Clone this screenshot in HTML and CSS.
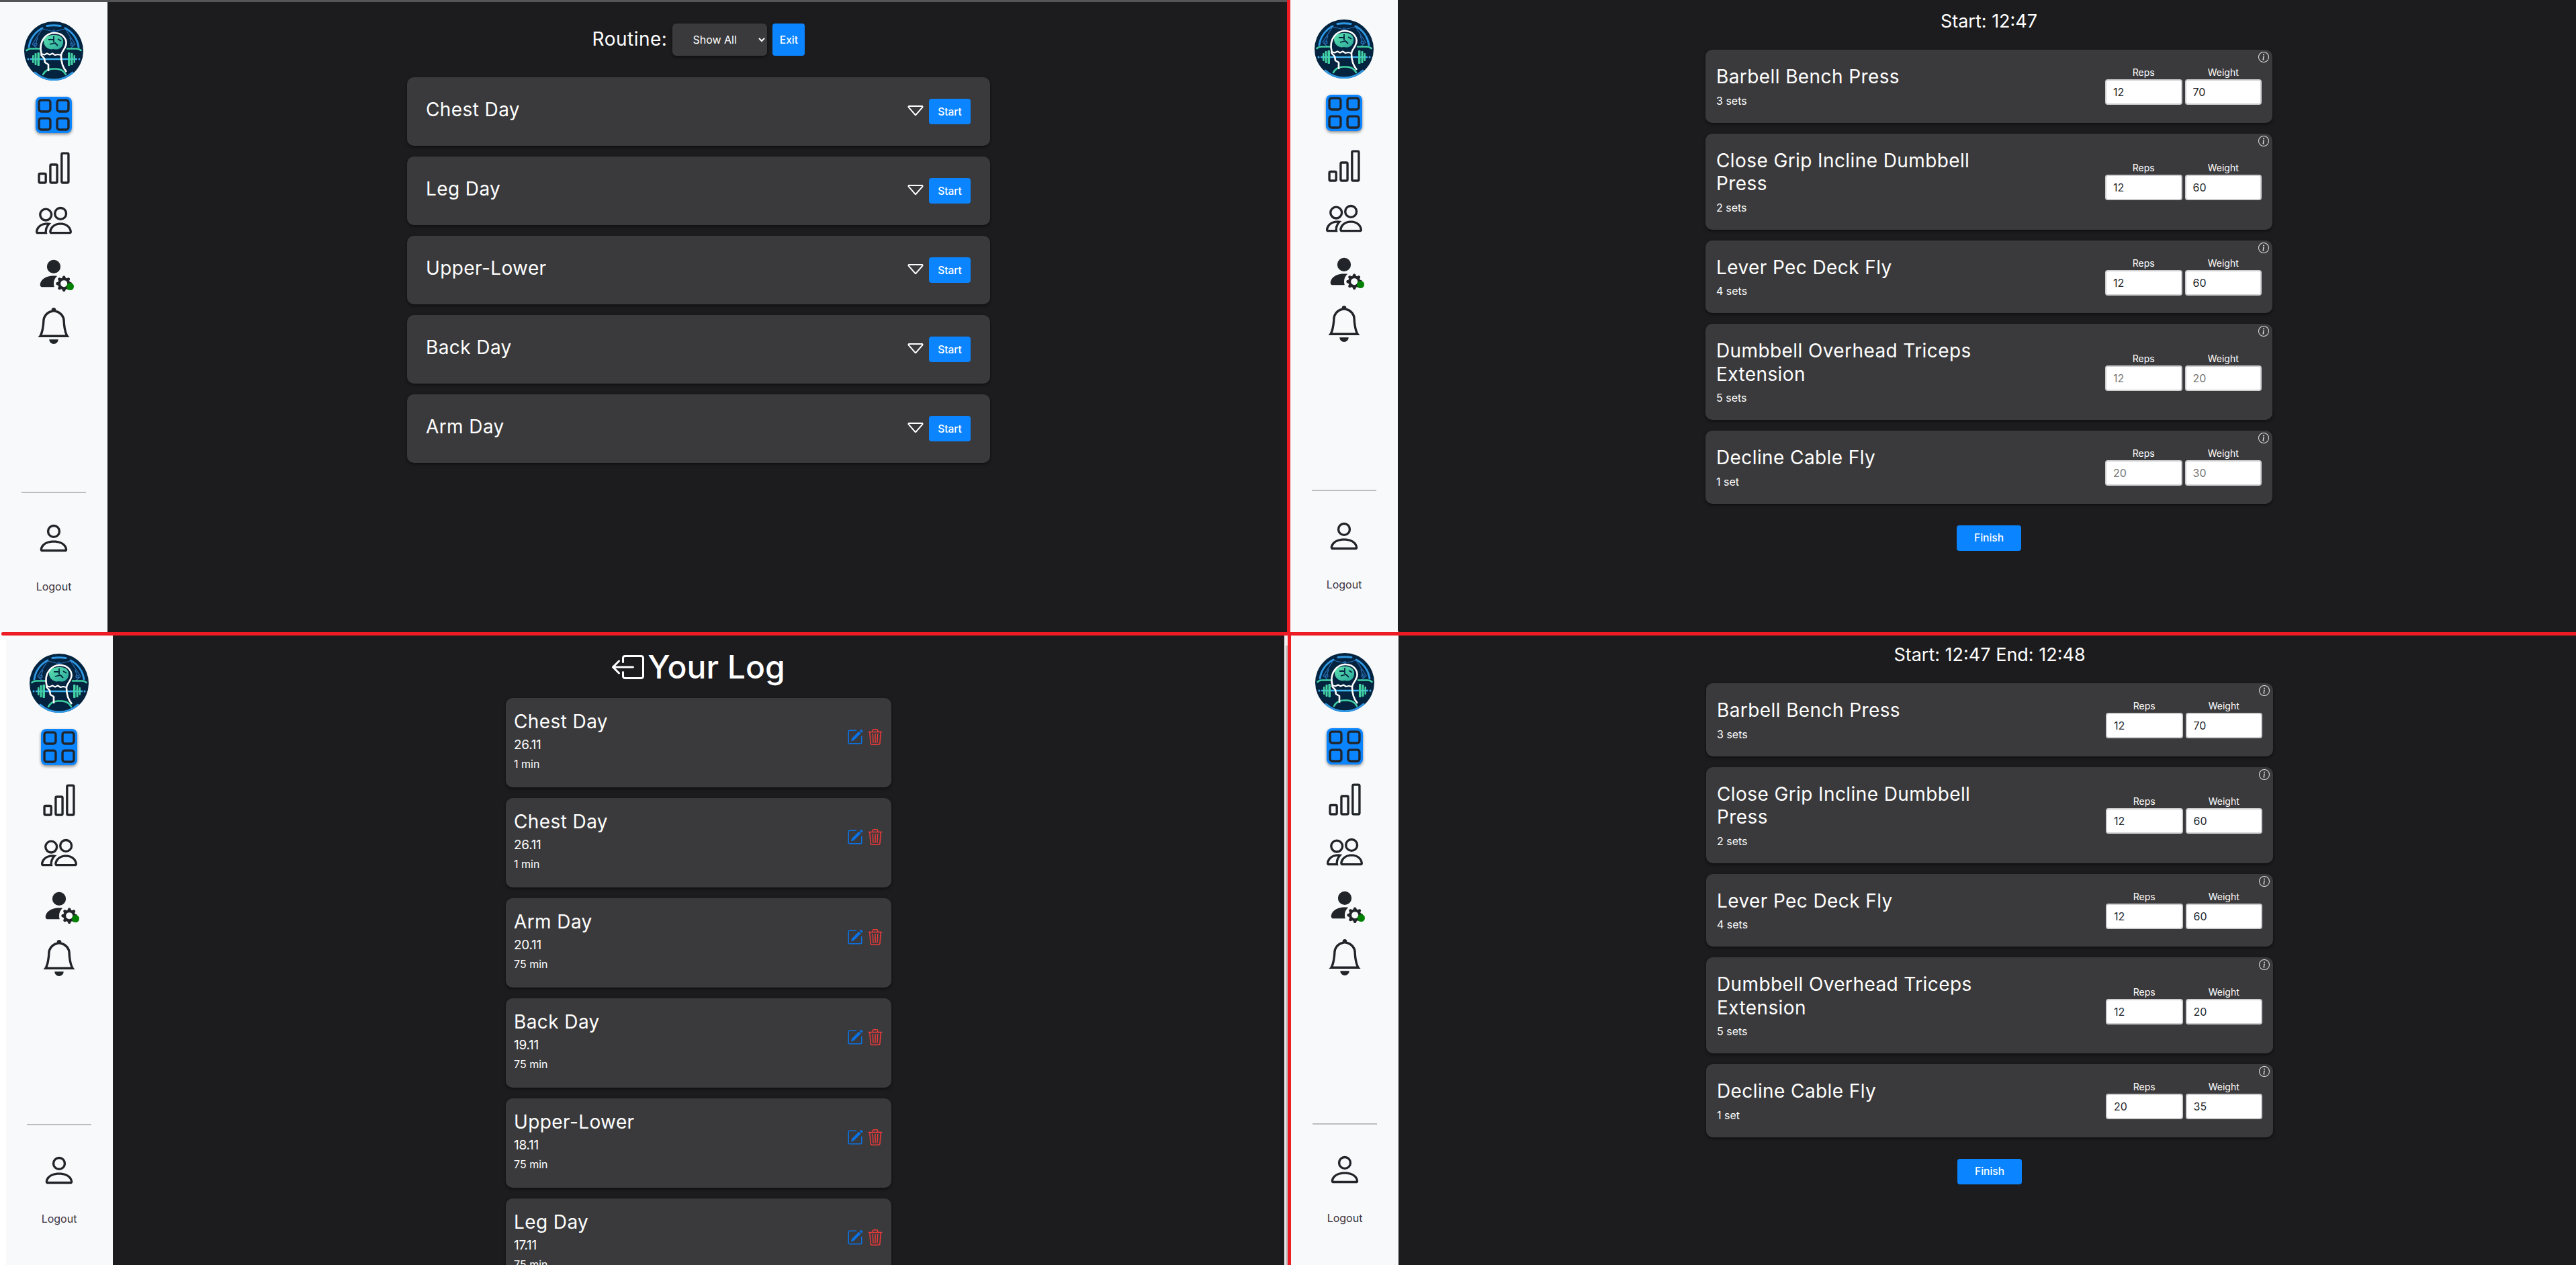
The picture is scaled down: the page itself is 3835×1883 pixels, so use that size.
FILE: index.html
```html
<!DOCTYPE html>
<html lang="en">
<head>
<meta charset="utf-8">
<title>Workout screens</title>
<link rel="stylesheet" href="styles.css">
</head>
<body>
<svg class="defs" aria-hidden="true">
  <defs>
    <linearGradient id="brainFill" x1="0" y1="0" x2="1" y2="1"><stop offset="0" stop-color="#5fe3b0"/><stop offset="1" stop-color="#2aa89a"/></linearGradient>
  </defs>
  <symbol id="logo" viewBox="0 0 88 88">
    <circle cx="44" cy="44" r="44" fill="#04233f"/>
    <g fill="none" stroke="#2f98e4" stroke-width="3" stroke-linecap="round">
      <path d="M7 38A38 38 0 0 1 27 10"/>
      <path d="M81 38A38 38 0 0 0 61 10"/>
      <path d="M34 6.500Q44 5 54 6.500"/>
      <path d="M16 76A42 42 0 0 0 72 76"/>
    </g>
    <g fill="none" stroke="#2a6fb4" stroke-width="1.200">
      <path d="M27 11L12 34L19 40M61 11L76 34L69 40M27 11L44 15L61 11M20 24L17 34M68 24L71 34"/>
      <circle cx="17" cy="34" r="2"/><circle cx="71" cy="34" r="2"/><circle cx="44" cy="14" r="1.500"/>
    </g>
    <g fill="none" stroke="#3fcfa3" stroke-width="2.600" stroke-linecap="round">
      <path d="M3.500 43Q6 40.500 10 40.500H24"/>
      <path d="M84.500 43Q82 40.500 78 40.500H64"/>
      <path d="M28 79Q32 71 42 70.500H48Q58 71 62 79"/>
    </g>
    <path d="M9 56H79" stroke="#3fb3ee" stroke-width="2.400" fill="none"/>
    <circle cx="6" cy="56" r="1.500" fill="#3fb3ee"/><circle cx="82" cy="56" r="1.500" fill="#3fb3ee"/>
    <g fill="#43d3a4">
      <rect x="12" y="50" width="2.500" height="12" rx="1"/><rect x="15.500" y="47" width="3" height="18" rx="1"/><rect x="19.500" y="46" width="3.500" height="20" rx="1"/>
      <rect x="65" y="46" width="3.500" height="20" rx="1"/><rect x="69.500" y="47" width="3" height="18" rx="1"/><rect x="73.500" y="50" width="2.500" height="12" rx="1"/>
    </g>
    <path d="M25 47C20 28 33 17 45 17C58 17 66 28 61 38C59 43 56 46 54 49Z" fill="#04233f"/>
    <path d="M29 29C29 22 38 20 45 20C55 20 59 25 58 32C57 40 50 43 44 41C37 43 29 38 29 29Z" fill="url(#brainFill)"/>
    <path d="M36 27H44M44 22V31M50 26L55 29M38 34L46 32L50 36" fill="none" stroke="#04233f" stroke-width="1.800"/>
    <path d="M36 74V64L31 61L30 55L25.500 50L25.500 47C21 29 33 17 45 17C58 17 66 28 61 38C59 43 55 46 55 51C55 60 57 68 63 75" fill="none" stroke="#fff" stroke-width="2.600" stroke-linejoin="round"/>
    <path d="M25.500 48L30 49.500L34 47.500L38 49.500L42 47.500L46 50L50 49L55 50" fill="none" stroke="#fff" stroke-width="2.200" stroke-linejoin="round"/>
  </symbol>
  <symbol id="i-grid" viewBox="0 0 16 16"><path d="M1 2.500A1.500 1.500 0 0 1 2.500 1h3A1.500 1.500 0 0 1 7 2.500v3A1.500 1.500 0 0 1 5.500 7h-3A1.500 1.500 0 0 1 1 5.500v-3zM2.500 2a.5.5 0 0 0-.5.5v3a.5.5 0 0 0 .5.5h3a.5.5 0 0 0 .5-.5v-3a.5.5 0 0 0-.5-.5h-3zm6.500.5A1.500 1.500 0 0 1 10.500 1h3A1.500 1.500 0 0 1 15 2.500v3A1.500 1.500 0 0 1 13.500 7h-3A1.500 1.500 0 0 1 9 5.500v-3zm1.500-.5a.5.5 0 0 0-.5.5v3a.5.5 0 0 0 .5.5h3a.5.5 0 0 0 .5-.5v-3a.5.5 0 0 0-.5-.5h-3zM1 10.500A1.500 1.500 0 0 1 2.500 9h3A1.500 1.500 0 0 1 7 10.500v3A1.500 1.500 0 0 1 5.500 15h-3A1.500 1.500 0 0 1 1 13.500v-3zm1.500-.5a.5.5 0 0 0-.5.5v3a.5.5 0 0 0 .5.5h3a.5.5 0 0 0 .5-.5v-3a.5.5 0 0 0-.5-.5h-3zm6.500.5A1.500 1.500 0 0 1 10.500 9h3a1.500 1.500 0 0 1 1.500 1.500v3a1.500 1.500 0 0 1-1.500 1.500h-3A1.500 1.500 0 0 1 9 13.500v-3zm1.500-.5a.5.5 0 0 0-.5.5v3a.5.5 0 0 0 .5.5h3a.5.5 0 0 0 .5-.5v-3a.5.5 0 0 0-.5-.5h-3z"/></symbol>
  <symbol id="i-chart" viewBox="0 0 16 16"><path d="M4 11H2v3h2v-3zm5-4H7v7h2V7zm5-5v12h-2V2h2zm-2-1a1 1 0 0 0-1 1v12a1 1 0 0 0 1 1h2a1 1 0 0 0 1-1V2a1 1 0 0 0-1-1h-2zM6 7a1 1 0 0 1 1-1h2a1 1 0 0 1 1 1v7a1 1 0 0 1-1 1H7a1 1 0 0 1-1-1V7zm-5 4a1 1 0 0 1 1-1h2a1 1 0 0 1 1 1v3a1 1 0 0 1-1 1H2a1 1 0 0 1-1-1v-3z"/></symbol>
  <symbol id="i-people" viewBox="0 0 16 16"><path d="M15 14s1 0 1-1-1-4-5-4-5 3-5 4 1 1 1 1h8Zm-7.978-1A.261.261 0 0 1 7 12.996c.001-.264.167-1.030.76-1.720C8.312 10.629 9.282 10 11 10c1.717 0 2.687.63 3.240 1.276.593.69.758 1.457.76 1.720l-.008.002a.274.274 0 0 1-.014.002H7.022ZM11 7a2 2 0 1 0 0-4 2 2 0 0 0 0 4Zm3-2a3 3 0 1 1-6 0 3 3 0 0 1 6 0ZM6.936 9.280a5.880 5.880 0 0 0-1.230-.247A7.350 7.350 0 0 0 5 9c-4 0-5 3-5 4 0 .667.333 1 1 1h4.216A2.238 2.238 0 0 1 5 13c0-1.010.377-2.042 1.090-2.904.243-.294.526-.569.846-.816ZM4.920 10A5.493 5.493 0 0 0 4 13H1c0-.26.164-1.030.76-1.724.545-.636 1.492-1.256 3.160-1.275ZM1.500 5.500a3 3 0 1 1 6 0 3 3 0 0 1-6 0Zm3-2a2 2 0 1 0 0 4 2 2 0 0 0 0-4Z"/></symbol>
  <symbol id="i-gear" viewBox="0 0 16 16"><path d="M11 5a3 3 0 1 1-6 0 3 3 0 0 1 6 0Zm-9 8c0 1 1 1 1 1h5.256A4.493 4.493 0 0 1 8 12.500a4.490 4.490 0 0 1 1.544-3.393C9.077 9.038 8.564 9 8 9c-5 0-6 3-6 4Zm9.886-3.540c.18-.613 1.048-.613 1.229 0l.043.148a.64.64 0 0 0 .921.382l.136-.074c.561-.306 1.175.308.87.869l-.075.136a.64.64 0 0 0 .382.92l.149.045c.612.18.612 1.048 0 1.229l-.15.043a.64.64 0 0 0-.38.921l.074.136c.305.561-.309 1.175-.87.87l-.136-.075a.64.64 0 0 0-.92.382l-.045.149c-.18.612-1.048.612-1.229 0l-.043-.15a.64.64 0 0 0-.921-.38l-.136.074c-.561.305-1.175-.309-.87-.87l.075-.136a.64.64 0 0 0-.382-.92l-.148-.045c-.613-.18-.613-1.048 0-1.229l.148-.043a.64.64 0 0 0 .382-.921l-.074-.136c-.306-.561.308-1.175.869-.87l.136.075a.64.64 0 0 0 .92-.382l.045-.149ZM14 12.500a1.500 1.500 0 1 0-3 0 1.500 1.500 0 0 0 3 0Z"/></symbol>
  <symbol id="i-bell" viewBox="0 0 16 16"><path d="M8 16a2 2 0 0 0 2-2H6a2 2 0 0 0 2 2zM8 1.918l-.797.161A4.002 4.002 0 0 0 4 6c0 .628-.134 2.197-.459 3.742-.16.767-.376 1.566-.663 2.258h10.244c-.287-.692-.502-1.490-.663-2.258C12.134 8.197 12 6.628 12 6a4.002 4.002 0 0 0-3.203-3.920L8 1.917zM14.220 12c.223.447.481.801.78 1H1c.299-.199.557-.553.78-1C2.680 10.200 3 6.880 3 6c0-2.420 1.720-4.440 4.005-4.901a1 1 0 1 1 1.990 0A5.002 5.002 0 0 1 13 6c0 .88.32 4.200 1.220 6z"/></symbol>
  <symbol id="i-person" viewBox="0 0 16 16"><path d="M8 8a3 3 0 1 0 0-6 3 3 0 0 0 0 6Zm2-3a2 2 0 1 1-4 0 2 2 0 0 1 4 0Zm4 8c0 1-1 1-1 1H3s-1 0-1-1 1-4 6-4 6 3 6 4Zm-1-.004c-.001-.246-.154-.986-.832-1.664C11.516 10.680 10.289 10 8 10c-2.290 0-3.516.68-4.168 1.332-.678.678-.83 1.418-.832 1.664h10Z"/></symbol>
  <symbol id="i-caret" viewBox="0 0 16 16"><path d="M3.204 5h9.592L8 10.481 3.204 5zm-.753.659 4.796 5.480a1 1 0 0 0 1.506 0l4.796-5.480c.566-.647.106-1.659-.753-1.659H3.204a1 1 0 0 0-.753 1.659z"/></symbol>
  <symbol id="i-info" viewBox="0 0 16 16"><path d="M8 15A7 7 0 1 1 8 1a7 7 0 0 1 0 14zm0 1A8 8 0 1 0 8 0a8 8 0 0 0 0 16z"/><path d="m8.930 6.588-2.290.287-.082.38.45.083c.294.07.352.176.288.469l-.738 3.468c-.194.897.105 1.319.808 1.319.545 0 1.178-.252 1.465-.598l.088-.42c-.2.176-.492.246-.686.246-.275 0-.375-.193-.304-.533L8.930 6.588zM9 4.500a1 1 0 1 1-2 0 1 1 0 0 1 2 0z"/></symbol>
  <symbol id="i-back" viewBox="0 0 16 16"><path d="M6 12.500a.5.5 0 0 0 .5.5h8a.5.5 0 0 0 .5-.5v-9a.5.5 0 0 0-.5-.5h-8a.5.5 0 0 0-.5.5v2a.5.5 0 0 1-1 0v-2A1.500 1.500 0 0 1 6.500 2h8A1.500 1.500 0 0 1 16 3.500v9a1.500 1.500 0 0 1-1.500 1.500h-8A1.500 1.500 0 0 1 5 12.500v-2a.5.5 0 0 1 1 0v2z"/><path d="M.146 8.354a.5.5 0 0 1 0-.708l3-3a.5.5 0 1 1 .708.708L1.707 7.500H10.500a.5.5 0 0 1 0 1H1.707l2.147 2.146a.5.5 0 0 1-.708.708l-3-3z"/></symbol>
  <symbol id="i-edit" viewBox="0 0 16 16"><path d="M15.502 1.940a.5.5 0 0 1 0 .706L14.459 3.690l-2-2L13.502.646a.5.5 0 0 1 .707 0l1.293 1.293zm-1.750 2.456-2-2L4.939 9.210a.5.5 0 0 0-.121.196l-.805 2.414a.25.25 0 0 0 .316.316l2.414-.805a.5.5 0 0 0 .196-.12l6.813-6.814z"/><path d="M1 13.500A1.500 1.500 0 0 0 2.500 15h11a1.500 1.500 0 0 0 1.500-1.500v-6a.5.5 0 0 0-1 0v6a.5.5 0 0 1-.5.5h-11a.5.5 0 0 1-.5-.5v-11a.5.5 0 0 1 .5-.5H9a.5.5 0 0 0 0-1H2.500A1.500 1.500 0 0 0 1 2.500v11z"/></symbol>
  <symbol id="i-trash" viewBox="0 0 16 16"><path d="M6.500 1h3a.5.5 0 0 1 .5.5v1H6v-1a.5.5 0 0 1 .5-.5ZM11 2.500v-1A1.500 1.500 0 0 0 9.500 0h-3A1.500 1.500 0 0 0 5 1.500v1H2.506a.58.58 0 0 0-.01 0H1.500a.5.5 0 0 0 0 1h.538l.853 10.660A2 2 0 0 0 4.885 16h6.230a2 2 0 0 0 1.994-1.840l.853-10.660h.538a.5.5 0 0 0 0-1h-.995a.59.59 0 0 0-.01 0H11Zm1.958 1-.846 10.580a1 1 0 0 1-.997.92h-6.230a1 1 0 0 1-.997-.92L3.042 3.500h9.916Zm-7.487 1a.5.5 0 0 1 .528.47l.5 8.500a.5.5 0 0 1-.998.06L5 5.030a.5.5 0 0 1 .47-.53Zm5.058 0a.5.5 0 0 1 .47.53l-.5 8.500a.5.5 0 1 1-.998-.06l.5-8.500a.5.5 0 0 1 .528-.47ZM8 4.500a.5.5 0 0 1 .5.5v8.500a.5.5 0 0 1-1 0V5a.5.5 0 0 1 .5-.5Z"/></symbol>
</svg>

<div class="canvas">

  <section class="pane pane--routines">
    <aside class="sidebar">
      <svg class="logo"><use href="#logo"/></svg>
      <nav class="nav">
        <a class="nav-item is-active"><svg class="icon"><use href="#i-grid"/></svg></a>
        <a class="nav-item"><svg class="icon"><use href="#i-chart"/></svg></a>
        <a class="nav-item"><svg class="icon"><use href="#i-people"/></svg></a>
        <a class="nav-item"><svg class="icon"><use href="#i-gear"/></svg><span class="status-dot"></span></a>
        <a class="nav-item"><svg class="icon"><use href="#i-bell"/></svg></a>
      </nav>
      <div class="side-foot">
        <hr class="side-rule">
        <a class="nav-item"><svg class="icon"><use href="#i-person"/></svg></a>
        <span class="logout">Logout</span>
      </div>
    </aside>
    <main class="main">
      <div class="routine-bar">
        <span class="routine-label">Routine:</span>
        <select class="routine-select"><option>Show All</option></select>
        <button class="btn btn--exit">Exit</button>
      </div>
      <div class="list list--routines">
        <article class="routine-card"><h2 class="card-title">Chest Day</h2><div class="routine-actions"><svg class="caret"><use href="#i-caret"/></svg><button class="btn btn--start">Start</button></div></article>
        <article class="routine-card"><h2 class="card-title">Leg Day</h2><div class="routine-actions"><svg class="caret"><use href="#i-caret"/></svg><button class="btn btn--start">Start</button></div></article>
        <article class="routine-card"><h2 class="card-title">Upper-Lower</h2><div class="routine-actions"><svg class="caret"><use href="#i-caret"/></svg><button class="btn btn--start">Start</button></div></article>
        <article class="routine-card"><h2 class="card-title">Back Day</h2><div class="routine-actions"><svg class="caret"><use href="#i-caret"/></svg><button class="btn btn--start">Start</button></div></article>
        <article class="routine-card"><h2 class="card-title">Arm Day</h2><div class="routine-actions"><svg class="caret"><use href="#i-caret"/></svg><button class="btn btn--start">Start</button></div></article>
      </div>
    </main>
  </section>

  <section class="pane pane--active">
    <aside class="sidebar">
      <svg class="logo"><use href="#logo"/></svg>
      <nav class="nav">
        <a class="nav-item is-active"><svg class="icon"><use href="#i-grid"/></svg></a>
        <a class="nav-item"><svg class="icon"><use href="#i-chart"/></svg></a>
        <a class="nav-item"><svg class="icon"><use href="#i-people"/></svg></a>
        <a class="nav-item"><svg class="icon"><use href="#i-gear"/></svg><span class="status-dot"></span></a>
        <a class="nav-item"><svg class="icon"><use href="#i-bell"/></svg></a>
      </nav>
      <div class="side-foot">
        <hr class="side-rule">
        <a class="nav-item"><svg class="icon"><use href="#i-person"/></svg></a>
        <span class="logout">Logout</span>
      </div>
    </aside>
    <main class="main">
      <h1 class="session-time">Start: 12:47</h1>
      <div class="list list--session">
        <article class="ex-card"><svg class="info"><use href="#i-info"/></svg><div class="ex-text"><h2 class="card-title">Barbell Bench Press</h2><p class="ex-sets">3 sets</p></div><div class="ex-fields"><label class="field"><span class="field-label">Reps</span><input class="field-input" value="12"></label><label class="field"><span class="field-label">Weight</span><input class="field-input" value="70"></label></div></article>
        <article class="ex-card"><svg class="info"><use href="#i-info"/></svg><div class="ex-text"><h2 class="card-title">Close Grip Incline Dumbbell Press</h2><p class="ex-sets">2 sets</p></div><div class="ex-fields"><label class="field"><span class="field-label">Reps</span><input class="field-input" value="12"></label><label class="field"><span class="field-label">Weight</span><input class="field-input" value="60"></label></div></article>
        <article class="ex-card"><svg class="info"><use href="#i-info"/></svg><div class="ex-text"><h2 class="card-title">Lever Pec Deck Fly</h2><p class="ex-sets">4 sets</p></div><div class="ex-fields"><label class="field"><span class="field-label">Reps</span><input class="field-input" value="12"></label><label class="field"><span class="field-label">Weight</span><input class="field-input" value="60"></label></div></article>
        <article class="ex-card"><svg class="info"><use href="#i-info"/></svg><div class="ex-text"><h2 class="card-title">Dumbbell Overhead Triceps Extension</h2><p class="ex-sets">5 sets</p></div><div class="ex-fields"><label class="field"><span class="field-label">Reps</span><input class="field-input" placeholder="12"></label><label class="field"><span class="field-label">Weight</span><input class="field-input" placeholder="20"></label></div></article>
        <article class="ex-card"><svg class="info"><use href="#i-info"/></svg><div class="ex-text"><h2 class="card-title">Decline Cable Fly</h2><p class="ex-sets">1 set</p></div><div class="ex-fields"><label class="field"><span class="field-label">Reps</span><input class="field-input" placeholder="20"></label><label class="field"><span class="field-label">Weight</span><input class="field-input" placeholder="30"></label></div></article>
      </div>
      <button class="btn btn--finish">Finish</button>
    </main>
  </section>

  <section class="pane pane--log">
    <aside class="sidebar">
      <svg class="logo"><use href="#logo"/></svg>
      <nav class="nav">
        <a class="nav-item is-active"><svg class="icon"><use href="#i-grid"/></svg></a>
        <a class="nav-item"><svg class="icon"><use href="#i-chart"/></svg></a>
        <a class="nav-item"><svg class="icon"><use href="#i-people"/></svg></a>
        <a class="nav-item"><svg class="icon"><use href="#i-gear"/></svg><span class="status-dot"></span></a>
        <a class="nav-item"><svg class="icon"><use href="#i-bell"/></svg></a>
      </nav>
      <div class="side-foot">
        <hr class="side-rule">
        <a class="nav-item"><svg class="icon"><use href="#i-person"/></svg></a>
        <span class="logout">Logout</span>
      </div>
    </aside>
    <main class="main">
      <h1 class="log-heading"><svg class="log-back"><use href="#i-back"/></svg>Your Log</h1>
      <div class="list list--log">
        <article class="log-card"><div><h2 class="card-title">Chest Day</h2><p class="log-date">26.11</p><p class="log-time">1 min</p></div><div class="log-actions"><svg class="log-icon log-icon--edit"><use href="#i-edit"/></svg><svg class="log-icon log-icon--trash"><use href="#i-trash"/></svg></div></article>
        <article class="log-card"><div><h2 class="card-title">Chest Day</h2><p class="log-date">26.11</p><p class="log-time">1 min</p></div><div class="log-actions"><svg class="log-icon log-icon--edit"><use href="#i-edit"/></svg><svg class="log-icon log-icon--trash"><use href="#i-trash"/></svg></div></article>
        <article class="log-card"><div><h2 class="card-title">Arm Day</h2><p class="log-date">20.11</p><p class="log-time">75 min</p></div><div class="log-actions"><svg class="log-icon log-icon--edit"><use href="#i-edit"/></svg><svg class="log-icon log-icon--trash"><use href="#i-trash"/></svg></div></article>
        <article class="log-card"><div><h2 class="card-title">Back Day</h2><p class="log-date">19.11</p><p class="log-time">75 min</p></div><div class="log-actions"><svg class="log-icon log-icon--edit"><use href="#i-edit"/></svg><svg class="log-icon log-icon--trash"><use href="#i-trash"/></svg></div></article>
        <article class="log-card"><div><h2 class="card-title">Upper-Lower</h2><p class="log-date">18.11</p><p class="log-time">75 min</p></div><div class="log-actions"><svg class="log-icon log-icon--edit"><use href="#i-edit"/></svg><svg class="log-icon log-icon--trash"><use href="#i-trash"/></svg></div></article>
        <article class="log-card"><div><h2 class="card-title">Leg Day</h2><p class="log-date">17.11</p><p class="log-time">75 min</p></div><div class="log-actions"><svg class="log-icon log-icon--edit"><use href="#i-edit"/></svg><svg class="log-icon log-icon--trash"><use href="#i-trash"/></svg></div></article>
      </div>
    </main>
    <div class="scrollbar"><div class="scrollbar-thumb"></div></div>
  </section>

  <section class="pane pane--finished">
    <aside class="sidebar">
      <svg class="logo"><use href="#logo"/></svg>
      <nav class="nav">
        <a class="nav-item is-active"><svg class="icon"><use href="#i-grid"/></svg></a>
        <a class="nav-item"><svg class="icon"><use href="#i-chart"/></svg></a>
        <a class="nav-item"><svg class="icon"><use href="#i-people"/></svg></a>
        <a class="nav-item"><svg class="icon"><use href="#i-gear"/></svg><span class="status-dot"></span></a>
        <a class="nav-item"><svg class="icon"><use href="#i-bell"/></svg></a>
      </nav>
      <div class="side-foot">
        <hr class="side-rule">
        <a class="nav-item"><svg class="icon"><use href="#i-person"/></svg></a>
        <span class="logout">Logout</span>
      </div>
    </aside>
    <main class="main">
      <h1 class="session-time">Start: 12:47 End: 12:48</h1>
      <div class="list list--session">
        <article class="ex-card"><svg class="info"><use href="#i-info"/></svg><div class="ex-text"><h2 class="card-title">Barbell Bench Press</h2><p class="ex-sets">3 sets</p></div><div class="ex-fields"><label class="field"><span class="field-label">Reps</span><input class="field-input" value="12"></label><label class="field"><span class="field-label">Weight</span><input class="field-input" value="70"></label></div></article>
        <article class="ex-card"><svg class="info"><use href="#i-info"/></svg><div class="ex-text"><h2 class="card-title">Close Grip Incline Dumbbell Press</h2><p class="ex-sets">2 sets</p></div><div class="ex-fields"><label class="field"><span class="field-label">Reps</span><input class="field-input" value="12"></label><label class="field"><span class="field-label">Weight</span><input class="field-input" value="60"></label></div></article>
        <article class="ex-card"><svg class="info"><use href="#i-info"/></svg><div class="ex-text"><h2 class="card-title">Lever Pec Deck Fly</h2><p class="ex-sets">4 sets</p></div><div class="ex-fields"><label class="field"><span class="field-label">Reps</span><input class="field-input" value="12"></label><label class="field"><span class="field-label">Weight</span><input class="field-input" value="60"></label></div></article>
        <article class="ex-card"><svg class="info"><use href="#i-info"/></svg><div class="ex-text"><h2 class="card-title">Dumbbell Overhead Triceps Extension</h2><p class="ex-sets">5 sets</p></div><div class="ex-fields"><label class="field"><span class="field-label">Reps</span><input class="field-input" value="12"></label><label class="field"><span class="field-label">Weight</span><input class="field-input" value="20"></label></div></article>
        <article class="ex-card"><svg class="info"><use href="#i-info"/></svg><div class="ex-text"><h2 class="card-title">Decline Cable Fly</h2><p class="ex-sets">1 set</p></div><div class="ex-fields"><label class="field"><span class="field-label">Reps</span><input class="field-input" value="20"></label><label class="field"><span class="field-label">Weight</span><input class="field-input" value="35"></label></div></article>
      </div>
      <button class="btn btn--finish">Finish</button>
    </main>
  </section>

  <div class="seam seam--h"></div>
  <div class="seam seam--v-top"></div>
  <div class="seam seam--v-bottom"></div>
  <div class="edge-strip"></div>
</div>
</body>
</html>
```

FILE: styles.css
```css
* { box-sizing: border-box; }

html, body { margin: 0; height: 100%; }

body {
  background: #1c1c1e;
  color: #fff;
  font-family: Inter, "Liberation Sans", sans-serif;
  overflow: hidden;
}

.defs { position: absolute; width: 0; height: 0; }

/* The screenshot is a collage of four windows on a free canvas */
.canvas {
  position: relative;
  width: 3835px;
  height: 1883px;
  overflow: hidden;
}

.pane {
  position: absolute;
  display: flex;
  width: 1920px;
  overflow: hidden;
  background: #1c1c1e;
}

.pane--routines { left: 0; top: 0; height: 941px; }
.pane--active { left: 1921px; top: -3px; height: 944px; }
.pane--log { left: 0; top: 941px; width: 1917px; height: 942px; }
.pane--finished { left: 1922px; top: 940px; height: 943px; }

.pane--routines::before {
  content: "";
  position: absolute;
  left: 0;
  right: 0;
  top: 0;
  height: 3px;
  background: #555;
}

/* Sidebar */
.sidebar {
  flex: none;
  display: flex;
  flex-direction: column;
  align-items: center;
  width: 160px;
  padding-top: 32px;
  background: #f8f9fa;
  color: #212529;
}

.pane--log .sidebar { width: 168px; padding-left: 8px; }

.logo { flex: none; display: block; width: 88px; height: 88px; }

.nav {
  display: flex;
  flex-direction: column;
  gap: 24.5px;
  margin-top: 24px;
}

.nav-item {
  position: relative;
  display: block;
  width: 54px;
  height: 54px;
}

.nav-item.is-active {
  background: #0a84ff;
  border-radius: 8px;
  box-shadow: 0 2px 4px rgba(0, 0, 0, .45);
}

.icon { display: block; width: 54px; height: 54px; fill: #212529; }

.status-dot {
  position: absolute;
  left: 46px;
  top: 41px;
  width: 11px;
  height: 11px;
  border-radius: 50%;
  background: #008000;
}

.side-foot {
  display: flex;
  flex-direction: column;
  align-items: center;
  margin-top: 220px;
}

.side-rule {
  width: 96px;
  height: 2px;
  margin: 0 0 40px;
  border: 0;
  background: #bdbdbf;
}

.logout {
  margin-top: 34px;
  font-size: 16px;
  line-height: 22px;
  color: #3a3340;
}

/* Main column */
.main {
  flex: 1;
  min-width: 0;
  display: flex;
  flex-direction: column;
  align-items: center;
}

.list { display: flex; flex-direction: column; gap: 16px; }

.card-title {
  margin: 0;
  font-size: 28px;
  font-weight: 400;
  letter-spacing: .4px;
  line-height: 34.500px;
  color: #fff;
}

/* Buttons */
.btn {
  border: 0;
  border-radius: 4px;
  background: #0a84ff;
  color: #fff;
  font-family: inherit;
  font-size: 15.5px;
  font-weight: 500;
  padding: 0;
}

.btn--exit { width: 48px; height: 48px; margin-left: 8px; }
.btn--start { width: 62px; height: 38px; }
.btn--finish { flex: none; width: 96px; height: 38px; margin-top: 32px; }

/* Routines */
.routine-bar {
  display: flex;
  align-items: center;
  height: 48px;
  margin-top: 35px;
}

.routine-label {
  font-size: 28px;
  letter-spacing: .5px;
  line-height: 32px;
  margin-right: 8px;
  margin-bottom: 3px;
}

.routine-select {
  width: 141px;
  height: 48px;
  padding: 0 0 0 26px;
  border: 0;
  border-radius: 6px;
  background: #3a3a3c;
  color: #fff;
  color-scheme: dark;
  font-family: inherit;
  font-size: 16px;
  box-shadow: 0 2px 4px rgba(0, 0, 0, .5);
}

.list--routines { width: 868px; margin-top: 32px; }

.routine-card {
  display: flex;
  align-items: center;
  justify-content: space-between;
  height: 102px;
  padding: 0 29px 0 28px;
  border-radius: 10px;
  background: #3a3a3c;
  box-shadow: 0 2px 4px rgba(0, 0, 0, .5);
}

.routine-card .card-title { margin-bottom: 6px; }

.routine-actions { display: flex; align-items: center; gap: 4px; }

.caret { display: block; width: 32px; height: 32px; fill: #fff; margin-top: -2px; }

/* Session */
.session-time {
  flex: none;
  margin: 16px 0 23px;
  font-size: 27px;
  font-weight: 400;
  line-height: 38px;
}

.list--session { width: 844px; }

.ex-card {
  position: relative;
  display: flex;
  align-items: center;
  justify-content: space-between;
  padding: 23px 16px 25px;
  border-radius: 10px;
  background: #3a3a3c;
  box-shadow: 0 2px 4px rgba(0, 0, 0, .5);
}

.info {
  position: absolute;
  top: 3px;
  right: 5px;
  width: 16px;
  height: 16px;
  fill: #e4e4e4;
}

.ex-text { width: 440px; }

.ex-sets {
  margin: 10px 0 0;
  font-size: 16px;
  line-height: 16px;
  color: #fff;
}

.ex-fields { display: flex; gap: 4px; }

.field { display: flex; flex-direction: column; align-items: center; }

.field-label { font-size: 14px; line-height: 20px; color: #fff; }

.field-input {
  width: 114.500px;
  height: 38px;
  padding: 0 10px;
  border: 2px solid #cfcfd2;
  border-radius: 4px;
  background: #fff;
  color: #212529;
  font-family: inherit;
  font-size: 16px;
  outline: 0;
}

.field-input::placeholder { color: #757575; opacity: 1; }

/* Log */
.log-heading {
  flex: none;
  display: flex;
  align-items: center;
  gap: 5px;
  height: 48px;
  margin: 28px 0 22px;
  font-size: 48px;
  font-weight: 500;
  line-height: 48px;
  color: #fff;
}

.log-back { display: block; width: 48px; height: 48px; fill: #fff; }

.list--log { width: 574px; flex: none; }

.log-card {
  display: flex;
  align-items: center;
  justify-content: space-between;
  flex: none;
  height: 133px;
  padding: 0 12px;
  border-radius: 10px;
  background: #3a3a3c;
  box-shadow: 0 2px 4px rgba(0, 0, 0, .5);
}

.log-date {
  margin: 4px 0 0;
  font-size: 19px;
  letter-spacing: -.3px;
  line-height: 26px;
}

.log-time { margin: 5px 0 7px; font-size: 16px; line-height: 20px; }

.log-actions { display: flex; gap: 6px; margin-bottom: 17px; }

.log-icon { display: block; width: 24px; height: 24px; }
.log-icon--edit { fill: #0a72e6; }
.log-icon--trash { fill: #f03a3a; }

.scrollbar {
  flex: none;
  width: 5px;
  padding-top: 20px;
  background: #f1f1f1;
}

.scrollbar-thumb { height: 100%; margin-left: 1.500px; background: #c1c1c1; }

/* Red seams drawn over the collage */
.seam { position: absolute; background: #ed1c24; }
.seam--h { left: 2px; right: 0; top: 941px; height: 5px; border-radius: 2px 0 0 2px; }
.seam--v-top { left: 1916px; top: 0; width: 5px; height: 941px; }
.seam--v-bottom { left: 1917px; top: 946px; bottom: 0; width: 5px; }

.edge-strip {
  position: absolute;
  left: 0;
  top: 953px;
  bottom: 0;
  width: 9px;
  background: #fff;
}
```
